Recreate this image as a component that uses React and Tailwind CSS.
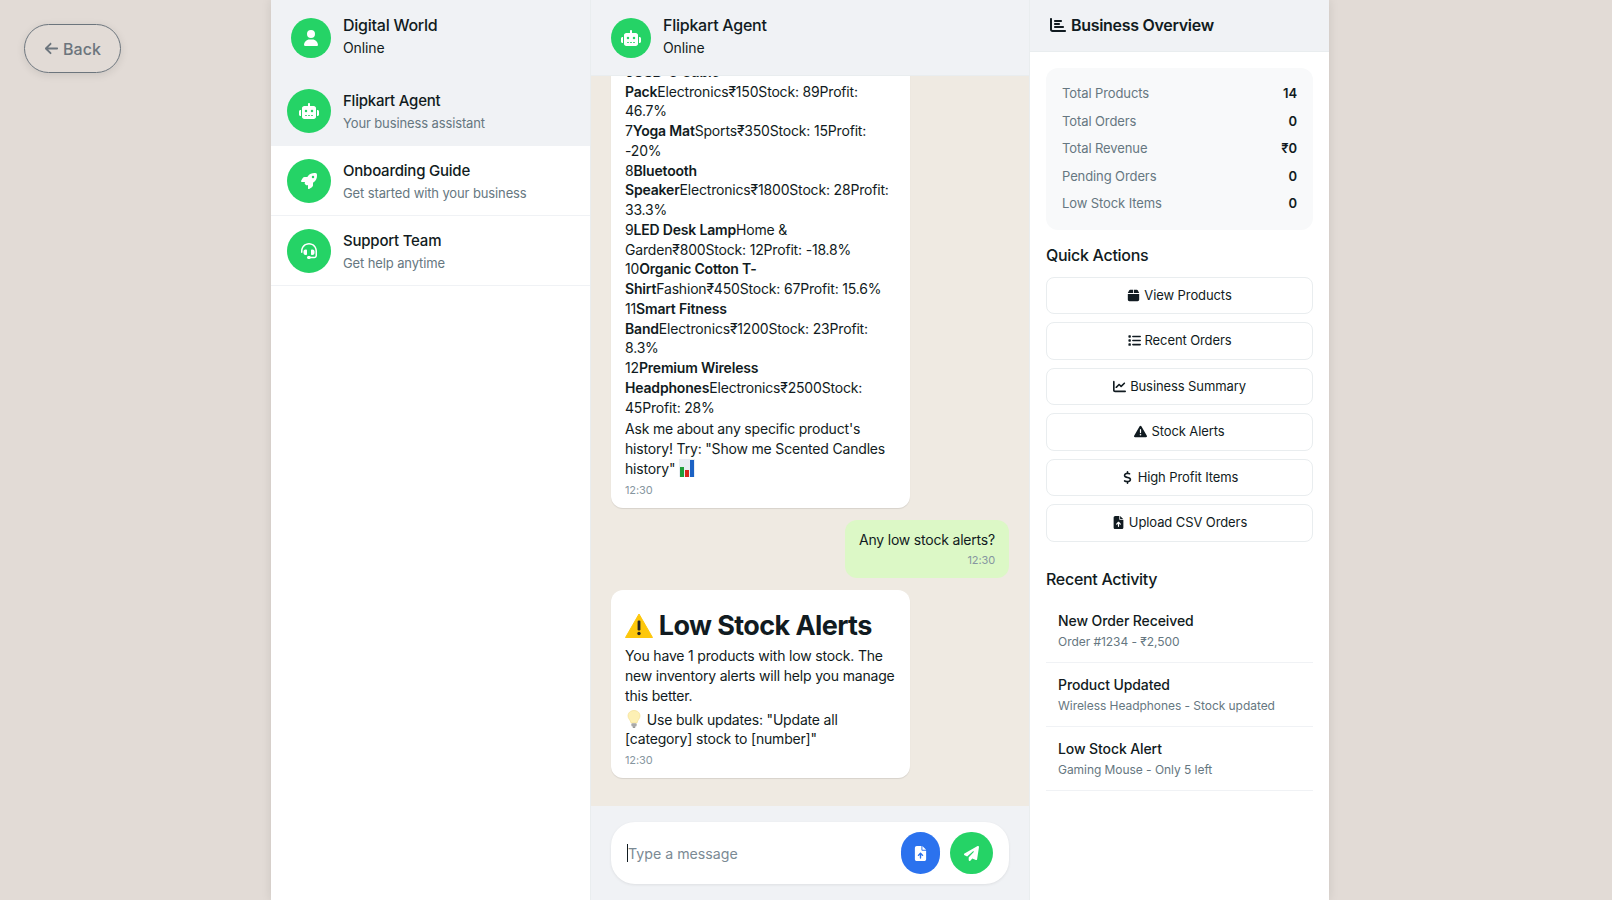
import React from 'react';
import {
  FaArrowLeft, FaUser, FaRobot, FaRocket, FaHeadset, FaChartBar, FaBox, FaList, FaChartLine,
  FaTriangleExclamation, FaDollarSign, FaFileArrowUp, FaPaperPlane,
} from 'react-icons/fa6';

const chats = [
  { name: 'Flipkart Agent', sub: 'Your business assistant', Icon: FaRobot, active: true },
  { name: 'Onboarding Guide', sub: 'Get started with your business', Icon: FaRocket },
  { name: 'Support Team', sub: 'Get help anytime', Icon: FaHeadset },
];

const stats = [
  ['Total Products', '14'],
  ['Total Orders', '0'],
  ['Total Revenue', '₹0'],
  ['Pending Orders', '0'],
  ['Low Stock Items', '0'],
];

const actions = [
  ['View Products', FaBox],
  ['Recent Orders', FaList],
  ['Business Summary', FaChartLine],
  ['Stock Alerts', FaTriangleExclamation],
  ['High Profit Items', FaDollarSign],
  ['Upload CSV Orders', FaFileArrowUp],
];

const activity = [
  ['New Order Received', 'Order #1234 - ₹2,500'],
  ['Product Updated', 'Wireless Headphones - Stock updated'],
  ['Low Stock Alert', 'Gaming Mouse - Only 5 left'],
];

const products = [
  ['6', 'USB-C Cable Pack', 'Electronics', '150', '89', '46.7%'],
  ['7', 'Yoga Mat', 'Sports', '350', '15', '-20%'],
  ['8', 'Bluetooth Speaker', 'Electronics', '1800', '28', '33.3%'],
  ['9', 'LED Desk Lamp', 'Home & Garden', '800', '12', '-18.8%'],
  ['10', 'Organic Cotton T-Shirt', 'Fashion', '450', '67', '15.6%'],
  ['11', 'Smart Fitness Band', 'Electronics', '1200', '23', '8.3%'],
  ['12', 'Premium Wireless Headphones', 'Electronics', '2500', '45', '28%'],
];

// the robot glyph is wider than it is tall, so it needs a bigger box
const Avatar = ({ Icon, large }) => (
  <div className={`flex shrink-0 items-center justify-center rounded-full bg-[#25d366] text-white ${large ? 'h-11 w-11' : 'h-10 w-10'}`}>
    <Icon className={Icon === FaRobot ? 'text-[20px]' : 'text-[16px]'} />
  </div>
);

const ChartEmoji = () => (
  <svg viewBox="0 0 16 18" className="inline-block h-[18px] w-4 align-[-3px]">
    <rect width="16" height="18" fill="#e8eef3" />
    <rect x="1" y="8" width="4" height="10" fill="#1f9e3a" />
    <rect x="6" y="11" width="4" height="7" fill="#d8261c" />
    <rect x="11" y="1" width="4" height="17" fill="#1c62c4" />
  </svg>
);

const WarningEmoji = () => (
  <svg viewBox="0 0 28 25" className="inline-block h-[25px] w-7 align-[-3px]">
    <path d="M14 1 L27.5 24.5 H0.5 Z" fill="#fdc70c" stroke="#fdc70c" strokeLinejoin="round" />
    <rect x="12.6" y="7.5" width="2.8" height="10" rx="1.2" fill="#222" />
    <circle cx="14" cy="20.5" r="1.7" fill="#222" />
  </svg>
);

const BulbEmoji = () => (
  <svg viewBox="0 0 14 18" className="mx-[2px] inline-block h-[18px] w-[14px] align-[-3px]">
    <path d="M7 0.5 C3.2 0.5 1 3 1 6 C1 8.8 3.6 10 4 13 H10 C10.4 10 13 8.8 13 6 C13 3 10.8 0.5 7 0.5 Z" fill="#fdf0b4" stroke="#f2dc8c" strokeWidth="0.6" />
    <rect x="4.4" y="13.2" width="5.2" height="3.2" rx="1" fill="#a9a9a9" />
    <rect x="5.6" y="16.4" width="2.8" height="1.4" rx="0.7" fill="#777" />
  </svg>
);

const Bubble = ({ children }) => (
  <div className="w-[299px] rounded-xl bg-white px-[14px] pb-[10px] pt-[10px] text-[14px] leading-[19.75px] tracking-[-0.18px] text-[#111b21] shadow-[0_1px_1px_rgba(0,0,0,0.1)]">
    {children}
    <div className="mt-[3px] text-[11px] leading-[16px] tracking-[-0.1px] text-[#8696a0]">12:30</div>
  </div>
);

export default function App() {
  return (
    <div className="relative h-screen w-full overflow-hidden bg-[#e2dbd6] font-['Inter',sans-serif]">
      {/* Back button */}
      <button className="absolute left-6 top-6 flex h-[49px] w-[97px] items-center justify-center gap-1 rounded-[25px] border border-[#6c757d] text-[16px] font-medium text-[#6c757d] shadow-[0_2px_8px_rgba(0,0,0,0.1)]">
        <FaArrowLeft className="text-[15px]" />
        Back
      </button>

      <div className="ml-[271px] flex h-full w-[1058px] shadow-[0_0_10px_rgba(0,0,0,0.1)]">
        {/* Chat list */}
        <div className="flex w-[320px] shrink-0 flex-col border-r border-[#e9edef] bg-white">
          <div className="flex h-[76px] items-center gap-3 bg-[#f0f2f5] pl-5">
            <Avatar Icon={FaUser} />
            <div className="-mt-[5px]">
              <div className="text-[16px] font-medium leading-[24px] tracking-[-0.25px] text-[#111b21]">Digital World</div>
              <div className="text-[14px] leading-[21px] tracking-[-0.1px] text-[#111b21]">Online</div>
            </div>
          </div>
          {chats.map(({ name, sub, Icon, active }) => (
            <div key={name} className={`flex h-[70px] items-center gap-3 border-b border-[#f0f2f5] px-4 ${active ? 'bg-[#f0f2f5]' : ''}`}>
              <Avatar Icon={Icon} large />
              <div className="mt-[2px]">
                <div className="text-[15px] font-medium leading-[22.5px] tracking-[-0.22px] text-[#111b21]">{name}</div>
                <div className="mt-[1.5px] text-[13px] leading-[19.5px] tracking-[-0.12px] text-[#667781]">{sub}</div>
              </div>
            </div>
          ))}
        </div>

        {/* Conversation */}
        <div className="flex min-w-0 flex-1 flex-col bg-[#efeae2]">
          <div className="z-10 flex h-[76px] shrink-0 items-center gap-3 border-b border-[#e9edef] bg-[#f0f2f5] pl-5">
            <Avatar Icon={FaRobot} />
            <div className="-mt-[5px]">
              <div className="text-[16px] font-medium leading-[24px] tracking-[-0.25px] text-[#111b21]">Flipkart Agent</div>
              <div className="text-[14px] leading-[21px] tracking-[-0.1px] text-[#111b21]">Online</div>
            </div>
          </div>

          <div className="flex min-h-0 flex-1 flex-col justify-end gap-3 overflow-hidden px-5 pb-7">
            <div className="shrink-0">
              <Bubble>
                {products.map(([n, name, cat, price, stock, profit]) => (
                  <div key={n}>
                    {n}<strong className="font-semibold">{name}</strong>{cat}₹{price}Stock: {stock}Profit: {profit}
                  </div>
                ))}
                <p className="mt-[2px]">
                  Ask me about any specific product's history! Try: "Show me Scented Candles history" <ChartEmoji />
                </p>
              </Bubble>
            </div>

            <div className="flex shrink-0 justify-end">
              <div className="rounded-xl bg-[#dcf8c6] px-[14px] pb-[10px] pt-[10px] text-[14px] leading-[19.6px] tracking-[-0.2px] text-[#111b21]">
                Any low stock alerts?
                <div className="mt-[3px] text-right text-[11px] leading-[16px] tracking-[-0.1px] text-[#8696a0]">12:30</div>
              </div>
            </div>

            <div className="shrink-0">
              <Bubble>
                <h1 className="mb-[2px] mt-[8px] text-[27px] font-bold leading-[36px] tracking-[-0.6px] text-[#111b21]">
                  <WarningEmoji /> Low Stock Alerts
                </h1>
                <p>You have 1 products with low stock. The new inventory alerts will help you manage this better.</p>
                <p className="mt-1"><BulbEmoji /> Use bulk updates: "Update all [category] stock to [number]"</p>
              </Bubble>
            </div>
          </div>

          {/* Composer */}
          <div className="shrink-0 bg-[#f0f2f5] px-5 pb-4 pt-4">
            <div className="flex h-[62px] items-center rounded-[24px] bg-white pl-4 pr-4 shadow-[0_1px_3px_rgba(0,0,0,0.08)]">
              <span className="h-[18px] w-px shrink-0 bg-[#111b21]" />
              <input
                readOnly
                placeholder="Type a message"
                className="mt-[2px] min-w-0 flex-1 bg-transparent text-[14.2px] text-[#111b21] outline-none placeholder:text-[#7b8a94]"
              />
              <button className="ml-2 flex h-[42px] w-[39px] items-center justify-center rounded-full bg-[#2b72ee] text-white">
                <FaFileArrowUp className="text-[15px]" />
              </button>
              <button className="ml-[10px] flex h-[42px] w-[43px] items-center justify-center rounded-full bg-[#25d366] text-white">
                <FaPaperPlane className="text-[15px]" />
              </button>
            </div>
          </div>
        </div>

        {/* Business overview */}
        <div className="flex w-[300px] shrink-0 flex-col border-l border-[#e9edef] bg-white">
          <div className="flex h-[52px] shrink-0 items-center gap-[5px] border-b border-[#e9edef] bg-[#f0f2f5] pb-[2px] pl-5 text-[16px] font-semibold tracking-[-0.3px] text-[#111b21]">
            <FaChartBar className="text-[16px]" />
            Business Overview
          </div>

          <div className="flex flex-col px-4 pt-4">
            <div className="rounded-xl bg-[#f8f9fa] p-4">
              {stats.map(([label, value], i) => (
                <div key={label} className={`flex justify-between text-[13px] leading-[19.5px] tracking-[-0.1px] ${i < stats.length - 1 ? 'mb-2' : ''}`}>
                  <span className="text-[#667781]">{label}</span>
                  <span className="font-semibold text-[#111b21]">{value}</span>
                </div>
              ))}
            </div>

            <h3 className="mt-[13px] text-[16px] font-medium leading-[24px] tracking-[-0.3px] text-[#111b21]">Quick Actions</h3>
            <div className="mt-[10px] flex flex-col gap-2">
              {actions.map(([label, Icon]) => (
                <button key={label} className="flex h-[37.5px] items-center justify-center gap-1 rounded-lg border border-[#e9edef] bg-white text-[13px] tracking-[-0.1px] text-[#111b21]">
                  <Icon className="text-[13px]" />
                  {label}
                </button>
              ))}
            </div>

            <h3 className="mt-[25px] text-[16px] font-medium leading-[24px] tracking-[-0.3px] text-[#111b21]">Recent Activity</h3>
            <div className="mt-[8px]">
              {activity.map(([title, sub]) => (
                <div key={title} className="border-b border-[#f0f2f5] px-3 py-[11px]">
                  <div className="text-[14px] font-medium leading-[21px] tracking-[-0.1px] text-[#111b21]">{title}</div>
                  <div className="mt-[2px] text-[12px] leading-[18px] tracking-[-0.05px] text-[#667781]">{sub}</div>
                </div>
              ))}
            </div>
          </div>
        </div>
      </div>
    </div>
  );
}
